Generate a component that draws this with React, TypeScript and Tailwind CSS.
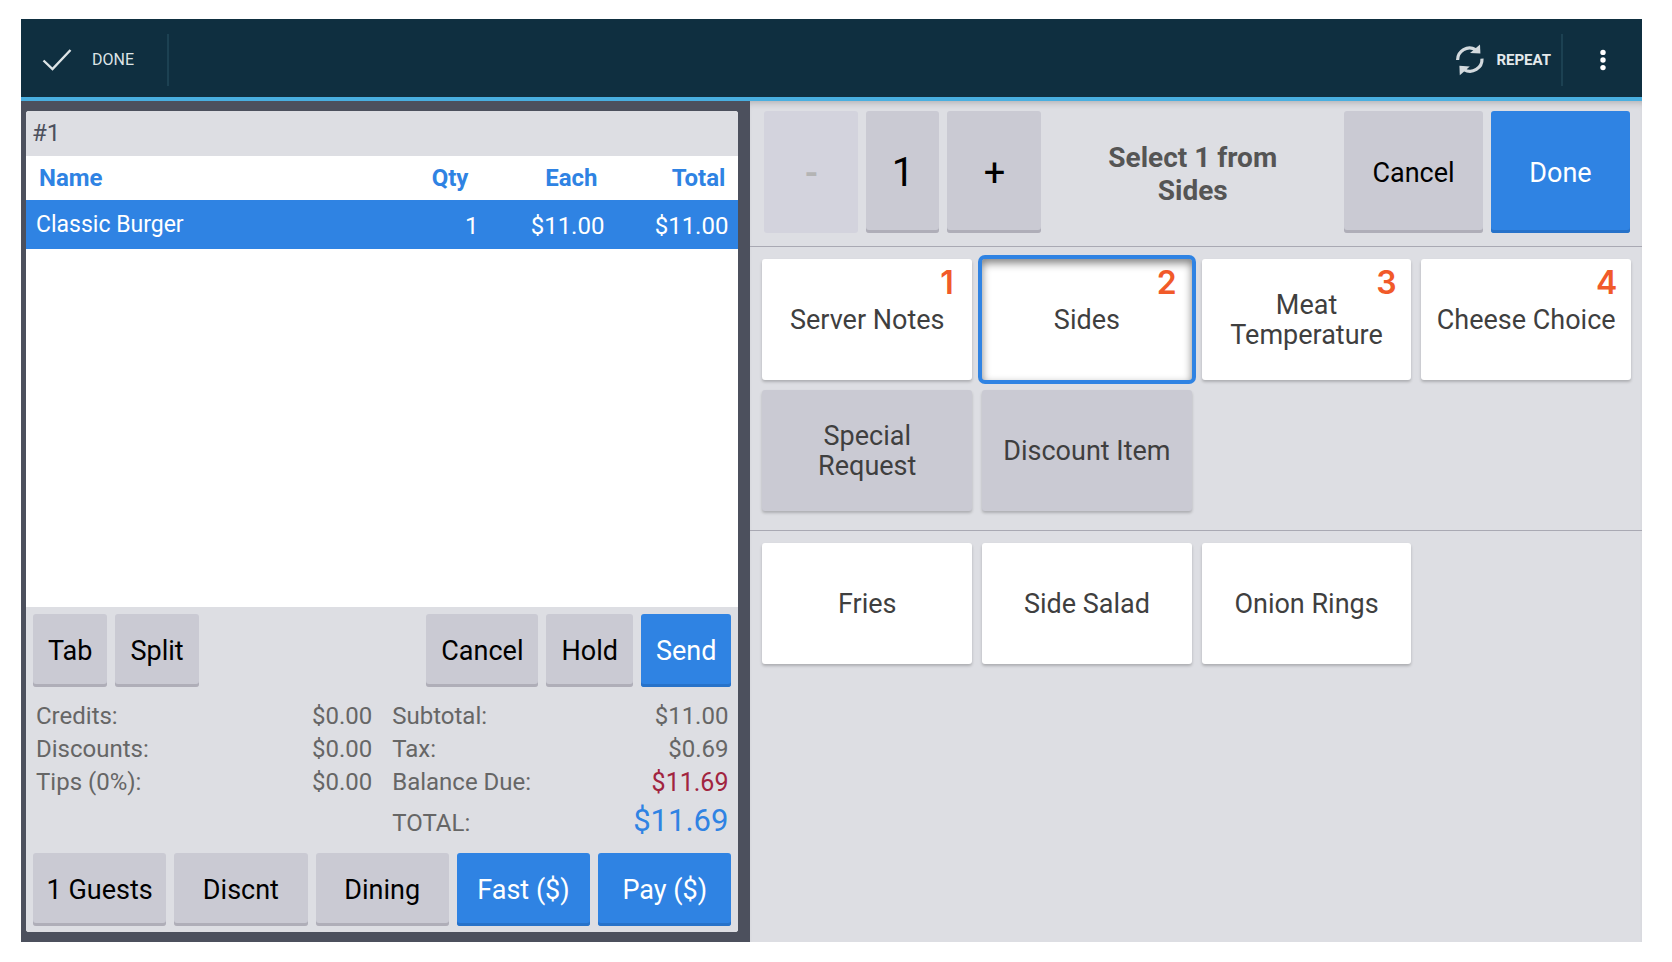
import { useState } from "react";
import type { ReactNode } from "react";

const GREY_KEY =
  "rounded-[3px] bg-[#cacad3] text-black shadow-[inset_0_-3px_0_#afaeb8]";
const BLUE_KEY =
  "rounded-[3px] bg-[#2f83e3] text-white shadow-[inset_0_-3px_0_#2772c9]";

const items = [{ name: "Classic Burger", qty: 1, each: "$11.00", total: "$11.00" }];

const adjustments = [
  { label: "Credits:", value: "$0.00" },
  { label: "Discounts:", value: "$0.00" },
  { label: "Tips (0%):", value: "$0.00" },
];

const groups = [
  { name: "Server Notes", order: 1 },
  { name: "Sides", order: 2 },
  { name: "Meat Temperature", order: 3 },
  { name: "Cheese Choice", order: 4 },
  { name: "Special Request" },
  { name: "Discount Item" },
];

const sides = ["Fries", "Side Salad", "Onion Rings"];

function CheckIcon() {
  return (
    <svg width="30" height="24" viewBox="0 0 30 24" fill="none" aria-hidden="true">
      <path d="M1.5 12.5 L10.5 21 L28.5 2" stroke="#dde4e6" strokeWidth="2.4" />
    </svg>
  );
}

function RepeatIcon() {
  return (
    <svg width="30" height="32" viewBox="0 0 30 32" fill="none" aria-hidden="true">
      <path d="M2.6 16 A12 12 0 0 1 20.6 5.6" stroke="#d3dade" strokeWidth="3.2" />
      <path d="M25 0.6 L25.4 9.6 L15 9 Z" fill="#d3dade" />
      <path d="M27 14.6 A12 12 0 0 1 9 25.6" stroke="#d3dade" strokeWidth="3.2" />
      <path d="M4.8 31.2 L4.4 21.8 L14.8 22.6 Z" fill="#d3dade" />
    </svg>
  );
}

function TopBar() {
  return (
    <header className="flex h-[82px] shrink-0 items-center border-b-4 border-[#49afe0] bg-[#0f2f40] pt-1">
      <button className="flex h-[52px] w-[148px] items-center gap-5 border-r-2 border-[#1c4152] pl-[21px] text-[16px] text-[#dde4e6]">
        <CheckIcon />
        DONE
      </button>
      <button className="ml-auto flex h-[52px] items-center gap-[11px] border-r-2 border-[#1c4152] pr-[10px] text-[15px] font-bold text-[#e4e9eb]">
        <RepeatIcon />
        REPEAT
      </button>
      <button aria-label="More options" className="flex h-[52px] w-[79px] items-center justify-center">
        <svg width="6" height="22" viewBox="0 0 6 22" fill="#fff" aria-hidden="true">
          <circle cx="3" cy="3.4" r="2.7" />
          <circle cx="3" cy="11" r="2.7" />
          <circle cx="3" cy="18.6" r="2.7" />
        </svg>
      </button>
    </header>
  );
}

function ActionKey({ children, blue }: { children: ReactNode; blue?: boolean }) {
  return (
    <button className={`h-[73px] px-[15px] pt-[2px] text-[27px] ${blue ? BLUE_KEY : GREY_KEY}`}>
      {children}
    </button>
  );
}

function BottomKey({ children, blue }: { children: ReactNode; blue?: boolean }) {
  return (
    <button className={`h-[73px] flex-1 pt-[2px] text-[27px] ${blue ? BLUE_KEY : GREY_KEY}`}>
      {children}
    </button>
  );
}

function Ticket() {
  return (
    <section className="flex w-[45%] bg-[#4c505d] pt-[10px] pr-3 pb-[10px] pl-[5px]">
      <div className="flex flex-1 flex-col overflow-hidden rounded-[3px] bg-white">
        <h1 className="h-[45px] bg-[#dddee3] pl-[6px] text-[24px] leading-[44px] text-[#4c505d]">#1</h1>

        <table className="w-full table-fixed text-[24px]">
          <colgroup>
            <col />
            <col className="w-[100px]" />
            <col className="w-[126px]" />
            <col className="w-[124px]" />
          </colgroup>
          <thead>
            <tr className="h-[44px] text-[#2f83e3]">
              <th className="pl-[13px] text-left font-bold">Name</th>
              <th className="pr-5 text-right font-bold">Qty</th>
              <th className="pr-[17px] text-right font-bold">Each</th>
              <th className="pr-[13px] text-right font-bold">Total</th>
            </tr>
          </thead>
          <tbody>
            {items.map((item) => (
              <tr key={item.name} className="h-[49px] bg-[#2f83e3] text-white">
                <td className="pt-[2px] pl-[10px] text-[23px]">{item.name}</td>
                <td className="pt-[2px] pr-[10px] text-right">{item.qty}</td>
                <td className="pt-[2px] pr-[10px] text-right">{item.each}</td>
                <td className="pt-[2px] pr-[10px] text-right">{item.total}</td>
              </tr>
            ))}
          </tbody>
        </table>

        <div className="mt-auto bg-[#dddee3] px-[7px] pt-[7px] pb-[6px]">
          <div className="flex gap-2">
            <ActionKey>Tab</ActionKey>
            <ActionKey>Split</ActionKey>
            <div className="flex-1" />
            <ActionKey>Cancel</ActionKey>
            <ActionKey>Hold</ActionKey>
            <ActionKey blue>Send</ActionKey>
          </div>

          <div className="flex gap-5 px-[3px] pt-[13px] pb-[10px] text-[24px] leading-[33px] text-[#666]">
            <dl className="flex-1">
              {adjustments.map((row) => (
                <div key={row.label} className="flex justify-between">
                  <dt>{row.label}</dt>
                  <dd>{row.value}</dd>
                </div>
              ))}
            </dl>
            <dl className="flex-1">
              <div className="flex justify-between">
                <dt>Subtotal:</dt>
                <dd>$11.00</dd>
              </div>
              <div className="flex justify-between">
                <dt>Tax:</dt>
                <dd>$0.69</dd>
              </div>
              <div className="flex justify-between">
                <dt>Balance Due:</dt>
                <dd className="text-[25px] text-[#a1243f]">$11.69</dd>
              </div>
              <div className="flex h-[44px] items-baseline justify-between leading-[44px]">
                <dt>TOTAL:</dt>
                <dd className="text-[31px] text-[#2f83e3]">$11.69</dd>
              </div>
            </dl>
          </div>

          <div className="flex gap-2">
            <BottomKey>1 Guests</BottomKey>
            <BottomKey>Discnt</BottomKey>
            <BottomKey>Dining</BottomKey>
            <BottomKey blue>Fast ($)</BottomKey>
            <BottomKey blue>Pay ($)</BottomKey>
          </div>
        </div>
      </div>
    </section>
  );
}

function Tile({
  name,
  order,
  muted,
  selected,
  onClick,
}: {
  name: string;
  order?: number;
  muted?: boolean;
  selected?: boolean;
  onClick?: () => void;
}) {
  const look = selected
    ? "bg-white ring-4 ring-[#2f83e3] shadow-[inset_0_4px_8px_0_rgba(0,0,0,0.5)]"
    : muted
      ? "bg-[#cacad3] shadow-[0_2px_3px_rgba(0,0,0,0.22)]"
      : "bg-white shadow-[0_2px_3px_rgba(0,0,0,0.22)]";

  return (
    <button
      onClick={onClick}
      className={`relative h-[121px] rounded-[3px] px-3 text-[27px] leading-[30px] text-[#3f3f3f] ${look}`}
    >
      {name}
      {order && (
        <span className="absolute top-2 right-[15px] w-5 text-center font-[Inter] text-[32px] leading-[32px] font-semibold text-[#f15a29]">
          {order}
        </span>
      )}
    </button>
  );
}

function Modifiers() {
  const [qty, setQty] = useState(1);
  const [group, setGroup] = useState("Sides");

  return (
    <section className="flex-1 bg-[#dddee3] shadow-[inset_0_6px_6px_-4px_rgba(0,0,0,0.2)]">
      <div className="flex h-[146px] gap-2 border-b border-[#a9a9b3] pt-[10px] pr-3 pb-3 pl-[14px]">
        <button
          disabled={qty === 1}
          onClick={() => setQty(qty - 1)}
          className="h-[122px] w-[94px] rounded-[3px] bg-[#cacad3] pt-[2px] text-[38px] font-medium text-black shadow-[inset_0_-3px_0_#afaeb8] disabled:bg-[#d3d3dd] disabled:text-[#b4b4b4] disabled:shadow-none"
        >
          -
        </button>
        <button className={`h-[122px] w-[73px] pt-[2px] text-[40px] ${GREY_KEY}`}>{qty}</button>
        <button onClick={() => setQty(qty + 1)} className={`h-[122px] w-[94px] pt-[2px] text-[38px] ${GREY_KEY}`}>
          +
        </button>
        <h2 className="flex flex-1 items-center justify-center px-[50px] pt-[2px] text-center text-[28px] leading-[33px] font-bold text-[#555]">
          Select 1 from {group}
        </h2>
        <button className={`h-[122px] w-[139px] pt-[2px] text-[27px] ${GREY_KEY}`}>Cancel</button>
        <button className={`h-[122px] w-[139px] pt-[2px] text-[27px] ${BLUE_KEY}`}>Done</button>
      </div>

      <div className="grid grid-cols-4 gap-[10px] border-b border-[#a9a9b3] pt-3 pr-[11px] pb-[19px] pl-3">
        {groups.map((g) => (
          <Tile
            key={g.name}
            name={g.name}
            order={g.order}
            muted={!g.order}
            selected={g.name === group}
            onClick={() => setGroup(g.name)}
          />
        ))}
      </div>

      <div className="grid grid-cols-4 gap-[10px] pt-3 pr-[11px] pl-3">
        {sides.map((side) => (
          <Tile key={side} name={side} />
        ))}
      </div>
    </section>
  );
}

export default function App() {
  return (
    <div className="flex min-h-screen flex-col bg-white pt-[19px] pr-[30px] pb-5 pl-[21px] font-[Roboto,sans-serif]">
      <TopBar />
      <main className="flex flex-1">
        <Ticket />
        <Modifiers />
      </main>
    </div>
  );
}
